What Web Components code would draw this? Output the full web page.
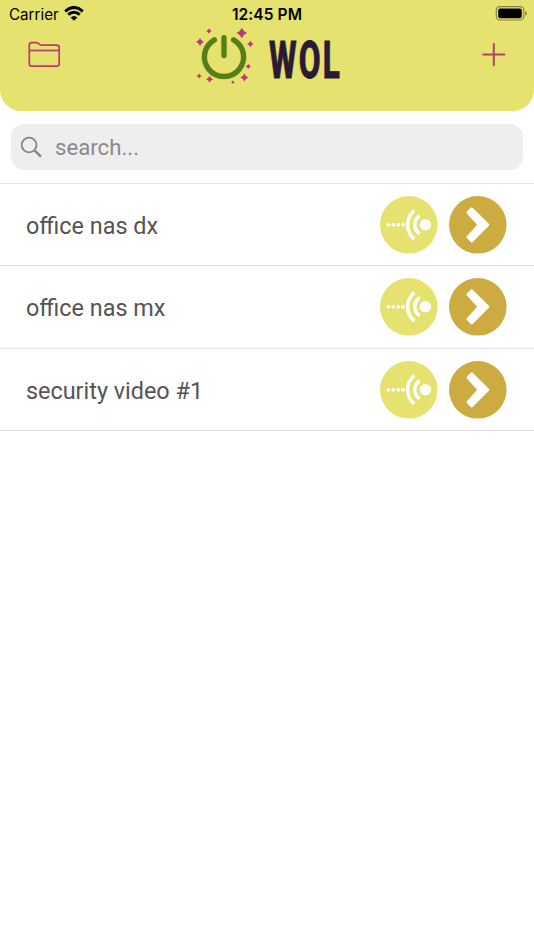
<!DOCTYPE html>
<html lang="en">
<head>
<meta charset="utf-8">
<title>WOL</title>
<style>
  body {
    margin: 0;
    background: #fff;
    font-family: Roboto, "Liberation Sans", sans-serif;
  }
</style>
</head>
<body>
<wol-app>
  <wol-header>WOL</wol-header>
  <search-bar>search...</search-bar>
  <device-list>
    <device-row>office nas dx</device-row>
    <device-row>office nas mx</device-row>
    <device-row>security video #1</device-row>
  </device-list>
</wol-app>

<script>
class WolApp extends HTMLElement {
  connectedCallback() {
    this.attachShadow({ mode: 'open' });
    this.shadowRoot.innerHTML = `
      <style>
        :host {
          display: flex;
          flex-direction: column;
          min-height: 950px;
        }
      </style>
      <slot></slot>
    `;
  }
}

class StatusBar extends HTMLElement {
  connectedCallback() {
    this.attachShadow({ mode: 'open' });
    this.shadowRoot.innerHTML = `
      <style>
        :host {
          display: grid;
          grid-template-columns: 1fr auto 1fr;
          align-items: center;
          height: 26px;
          padding: 0 7px 0 9px;
          font-family: Inter, "Liberation Sans", sans-serif;
          color: #000;
        }
        .carrier {
          display: flex;
          align-items: center;
          gap: 5px;
          font-size: 15.2px;
          line-height: 26px;
        }
        .carrier svg {
          margin-top: -1px;
        }
        .carrier span, .time {
          padding-top: 2px;
        }
        .time {
          margin-right: 2px;
          font-size: 15.5px;
          font-weight: 600;
          line-height: 26px;
          letter-spacing: 0.1px;
        }
        .battery {
          justify-self: end;
          margin-right: -1px;
          margin-top: -1px;
        }
        svg {
          display: block;
        }
      </style>
      <div class="carrier">
        <span>Carrier</span>
        <svg width="20" height="15" viewBox="0 .8 20 15">
          <g fill="none" stroke="#000" stroke-width="2.9">
            <path d="M1.2 6.1 Q10 -1.7 18.8 6.1"/>
            <path d="M4.2 9.5 Q10 4.4 15.8 9.5"/>
          </g>
          <path d="M6.6 12.2 Q10 9.2 13.4 12.2 L10 15.6Z"/>
        </svg>
      </div>
      <div class="time">12:45 PM</div>
      <svg class="battery" width="33" height="15" viewBox="0 .3 33 15">
        <rect x="1.3" y=".9" width="27.5" height="13.4" rx="3.6" fill="none" stroke="#87843f" stroke-width="1.2"/>
        <rect x="3.2" y="2.8" width="23.6" height="9.7" rx="2"/>
        <path d="M30.2 5.2 Q32 5.8 32 7.6 T30.2 10Z" fill="#87843f"/>
      </svg>
    `;
  }
}

class WolHeader extends HTMLElement {
  connectedCallback() {
    const star = (x, y, r) => {
      const c = r * 0.28;
      return `<path d="M${x} ${y - r}Q${x + c} ${y - c} ${x + r} ${y}Q${x + c} ${y + c} ${x} ${y + r}Q${x - c} ${y + c} ${x - r} ${y}Q${x - c} ${y - c} ${x} ${y - r}Z"/>`;
    };
    this.attachShadow({ mode: 'open' });
    this.shadowRoot.innerHTML = `
      <style>
        :host {
          display: block;
          height: 111px;
          background: #e5e26f;
          border-radius: 0 0 21px 21px;
        }
        .toolbar {
          display: grid;
          grid-template-columns: 1fr auto 1fr;
          height: 62px;
          padding: 0 28px;
        }
        .folder {
          margin-top: 15px;
        }
        .add {
          justify-self: end;
          margin-top: 17px;
        }
        .brand {
          display: flex;
          gap: 15px;
          margin-left: 2px;
        }
        .name {
          width: 71px;
          height: 60px;
          margin-top: 4.5px;
        }
        .name span {
          display: inline-block;
          color: #2b1a33;
          font-size: 51px;
          font-weight: 800;
          line-height: 60px;
          letter-spacing: 3.5px;
          -webkit-text-stroke: 0.8px #2b1a33;
          transform: scaleX(.62);
          transform-origin: left;
          white-space: nowrap;
        }
        svg {
          display: block;
        }
      </style>
      <status-bar></status-bar>
      <div class="toolbar">
        <svg class="folder" width="33" height="28" viewBox="0 0 33 28" fill="none" stroke="#b83b72" stroke-width="1.7" stroke-linejoin="round">
          <path d="M1.3 22.5V4Q1.3 1.6 3.7 1.6H8.5Q10 1.6 10.9 2.8L11.3 3.3Q12 4.1 13.4 4.1H28.5Q31.2 4.1 31.2 6.7V22.5Q31.2 25.2 28.5 25.2H4Q1.3 25.2 1.3 22.5Z"/>
          <path d="M1.3 9.5H31.2"/>
        </svg>
        <div class="brand">
          <svg width="58" height="58" viewBox="196 26 58 58">
            <g fill="none" stroke="#577f18" stroke-width="5.4" stroke-linecap="round">
              <path d="M214.4 39.8A19.6 19.6 0 1 0 233.6 39.8"/>
              <path d="M224 37.8V55.6"/>
            </g>
            <g fill="#b83b72">
              ${star(241.8, 33, 5.3)}${star(250.4, 44, 3.2)}${star(209, 31, 2.8)}
              ${star(200, 42, 3.9)}${star(248.3, 66.4, 2.6)}${star(244.4, 77.4, 4)}
              ${star(232.9, 82.2, 1.9)}${star(209.6, 79.2, 3.5)}${star(199.2, 76, 2.6)}
            </g>
          </svg>
          <div class="name"><span><slot></slot></span></div>
        </div>
        <svg class="add" width="24" height="24" viewBox="0 0 24 24" stroke="#b83b72" stroke-width="2" stroke-linecap="round">
          <path d="M11.8 1V22.2M1.2 11.4H22.4"/>
        </svg>
      </div>
    `;
  }
}

class SearchBar extends HTMLElement {
  connectedCallback() {
    this.attachShadow({ mode: 'open' });
    this.shadowRoot.innerHTML = `
      <style>
        :host {
          display: flex;
          align-items: center;
          gap: 12px;
          box-sizing: border-box;
          height: 46px;
          margin: 13px 11px;
          padding: 0 10px;
          border-radius: 13px;
          background: #eee;
          color: #8a8a8e;
          font-size: 22.2px;
        }
        span {
          padding-top: 1px;
          line-height: 45px;
        }
      </style>
      <svg width="22" height="22" viewBox="0 0 22 22" fill="none" stroke="#86868a">
        <circle cx="8.1" cy="9" r="7.4" stroke-width="1.8"/>
        <path d="M13.5 14.3L20 20.7" stroke-width="2.4"/>
      </svg>
      <span><slot></slot></span>
    `;
  }
}

class DeviceList extends HTMLElement {
  connectedCallback() {
    this.attachShadow({ mode: 'open' });
    this.shadowRoot.innerHTML = `
      <style>
        :host {
          display: block;
          border-top: 1px solid #e3e3e3;
        }
      </style>
      <slot></slot>
    `;
  }
}

class DeviceRow extends HTMLElement {
  connectedCallback() {
    this.attachShadow({ mode: 'open' });
    this.shadowRoot.innerHTML = `
      <style>
        :host {
          display: flex;
          align-items: center;
          gap: 12px;
          box-sizing: border-box;
          height: 82.45px;
          padding: 0 27px 0 26px;
          border-bottom: 1px solid #e3e3e3;
          color: #545454;
          font-size: 23.4px;
        }
        .label {
          flex: 1;
          padding-top: 2px;
        }
        svg {
          display: block;
          width: 57.6px;
          height: 57.6px;
          overflow: visible;
        }
      </style>
      <span class="label"><slot></slot></span>
      <svg viewBox="0 0 57.6 57.6">
        <circle cx="28.8" cy="28.8" r="28.8" fill="#e5e26f"/>
        <g fill="#fff">
          <circle cx="8.4" cy="28.8" r="1.9"/>
          <circle cx="13.3" cy="28.8" r="1.9"/>
          <circle cx="18.2" cy="28.8" r="1.9"/>
          <circle cx="23" cy="28.8" r="1.9"/>
          <circle cx="45.4" cy="28.8" r="5.7"/>
        </g>
        <g fill="none" stroke="#fff" stroke-width="3.5">
          <path d="M34.3 14.6A18.4 18.4 0 0 0 34.3 43"/>
          <path d="M39.6 19.8A10.8 10.8 0 0 0 39.6 37.8"/>
        </g>
      </svg>
      <svg viewBox="0 0 57.6 57.6">
        <circle cx="28.8" cy="28.8" r="28.8" fill="#ccab41"/>
        <path d="M22.7 12.7L38.9 28.8L22.7 44.9L18.9 41.1L30.1 28.8L18.9 16.5Z" fill="#fff" stroke="#fff" stroke-width="2.8" stroke-linejoin="round"/>
      </svg>
    `;
  }
}

customElements.define('wol-app', WolApp);
customElements.define('status-bar', StatusBar);
customElements.define('wol-header', WolHeader);
customElements.define('search-bar', SearchBar);
customElements.define('device-list', DeviceList);
customElements.define('device-row', DeviceRow);
</script>
</body>
</html>
